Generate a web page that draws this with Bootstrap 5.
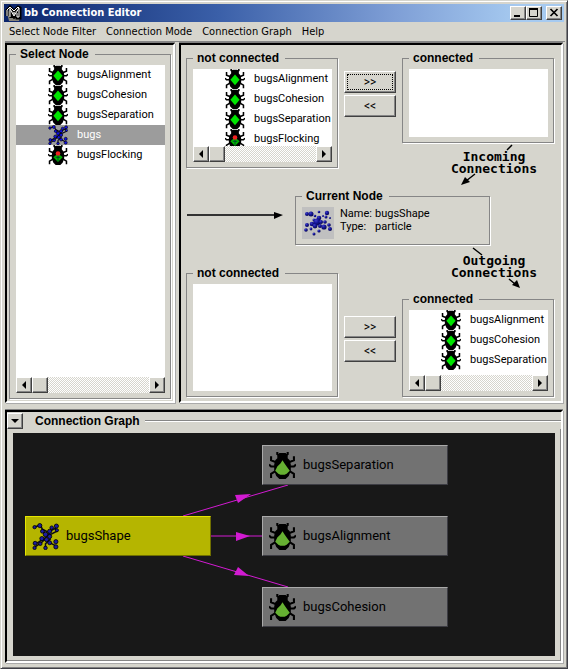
<!DOCTYPE html>
<html lang="en">
<head>
<meta charset="utf-8">
<meta name="viewport" content="width=device-width, initial-scale=1">
<title>bb Connection Editor</title>
<link rel="stylesheet" href="https://cdn.jsdelivr.net/npm/bootstrap@5.3.0/dist/css/bootstrap.min.css">
<style>
:root{--face:#d6d5cd;--shade:#868686;--dark:#404040}
body{background:var(--face);color:#000;font:11px/20px Roboto,"Liberation Sans",sans-serif}
.window-frame{min-height:100vh;padding:3px 2px 5px 4px;border:1px solid #d6d5cd;border-right-color:#404048;border-bottom-color:#404048;box-shadow:inset 1px 1px #fff,inset -1px -1px #808080}
.title-strip{height:18px;background:linear-gradient(90deg,#0a246a,#3a5fa8 38%,#7f9fd6 70%,#a6caf0 92%);color:#fff;font:bold 11px/18px "DejaVu Sans Condensed","DejaVu Sans",sans-serif;padding:0 2px 0 1px;margin-left:-1px;margin-right:1px}
.title-strip h1{font:inherit;padding-left:2px}
.raised{background:var(--face);border:1px solid;border-color:#fff var(--dark) var(--dark) #fff;box-shadow:inset -1px -1px var(--shade);border-radius:0;padding:0;color:#000}
.win-btn{width:16px;height:14px}
.menu-strip{height:20px;gap:10px;padding:0 4px;font:11px/20px "DejaVu Sans Condensed","DejaVu Sans",sans-serif;border-bottom:1px solid var(--shade)}
.menu-strip a{color:#000;text-decoration:none}
.main-area{padding:1px 2px 0 0}
.sunk{border:2px solid;border-color:#000 #fff #fff #000;box-shadow:0 -1px #808080,1px 1px #aaa}
.node-pane{flex:0 0 170px;min-width:0;padding:2px}
fieldset.group{min-width:0;border:1px solid var(--shade);padding:4px 5px 5px 6px;box-shadow:1px 1px #fff}
.group>legend{float:none;width:auto;margin:0;padding:0 6px 0 4px;font:bold 12px/14px "Liberation Sans",Arial,sans-serif;background:var(--face)}
.node-list{background:#fff;overflow:hidden;margin:0;padding:0;list-style:none;flex:1 1 0;min-height:0}
.node-list li{display:flex;height:20px;padding-left:32px;line-height:20px;white-space:nowrap}
.node-list li.picked{background:#9c9c9c;color:#fff}
.node-list svg{width:20px;height:20px;margin-right:9px;flex:none}
.scroller{height:16px;display:flex;flex:none;background:repeating-conic-gradient(#fff 0 25%,#d6d5cd 0 50%) 0 0/2px 2px}
.scroller>.raised{width:16px;height:16px;flex:none;display:flex}
.scroller svg{margin:auto}
.work-grid{display:grid;grid-template-columns:minmax(0,152fr) minmax(0,52fr) minmax(0,152fr);grid-template-rows:92px 46px 56px 47px 105px;column-gap:6px;padding:6px 7px 4px 5px;min-width:0}
.move-btn{height:22px;width:100%;font:12px/18px Roboto,sans-serif}
.move-btn.focused{outline:1px dotted #000;outline-offset:-4px}
.flow-label{position:relative;font:bold 13px/12px "DejaVu Sans Mono",monospace;text-align:center;padding-left:32px}
.flow-label svg{position:absolute;left:0;top:0}
.flow-label p{margin:0}
.arrow-cell{flex:0 0 109px}
.current-box{flex:0 0 195px}
.thumb-box{width:32px;height:32px;background:#c0c0c0;flex:none}
.facts{line-height:13px;display:grid;grid-template-columns:35px auto;align-content:start;margin:0 0 0 6px}
.facts dt{font-weight:400}.facts dd{margin:0}
.graph-pane{margin-top:7px}
.graph-head{height:17px}
.graph-head .rule{flex:1;height:2px;border-top:1px solid var(--shade);border-bottom:1px solid #fff}
.graph-head h2{font:bold 12px/16px "Liberation Sans",Arial,sans-serif;margin:0;padding:0 5px 0 12px}
.fold-btn{width:16px;height:16px;display:flex}
.fold-btn svg{margin:auto}
.graph-body{border-right:1px solid var(--shade);border-bottom:1px solid var(--shade);padding:4px 5px 4px 6px}
.canvas{background:#181818;position:relative;overflow:hidden}
.canvas>svg{position:absolute;left:0;top:0}
.gnode{position:absolute;width:186px;height:40px;background:#727272;border:1px solid;border-color:#aaa #3d3d44 #3d3d44 #aaa;display:flex;align-items:center;font:13px/20px Roboto,sans-serif;padding-left:6px;gap:7px}
.gnode svg{width:27px;height:27px;flex:none}
.gnode.main{background:#b5b500;border-color:#e6e600 #6f6f00 #6f6f00 #e6e600}
.at-main{left:12px;top:83px}.at-sep{left:249px;top:12px}.at-ali{left:249px;top:83px}.at-coh{left:249px;top:154px}
.cell-in-from{grid-area:1/1/3/2;margin-bottom:21px}
.cell-in-btns{grid-area:1/2;padding-top:20px;row-gap:2px}
.cell-in-to{grid-area:1/3}
.cell-in-label{grid-area:2/3;padding-top:8px}
.cell-current{grid-area:3/1/4/4}
.cell-out-label{grid-area:4/3;padding-top:10px}
.cell-out-from{grid-area:4/1/6/2;margin-top:21px}
.cell-out-btns{grid-area:5/2;padding-top:24px;row-gap:2px}
.cell-out-to{grid-area:5/3}
</style>
<script src="https://cdn.jsdelivr.net/npm/bootstrap@5.3.0/dist/js/bootstrap.bundle.min.js"></script>
</head>
<body>
<svg width="0" height="0" class="position-absolute" aria-hidden="true">
  <symbol id="beetle" viewBox="0 0 26 26">
    <path d="M10 3L8 2V0M16 3l2-1V0M2 4v4l5 2M24 4v4l-5 2M0 12l2 2h4M26 12l-2 2h-4M2 25v-4l5-3M24 25v-4l-5-3" fill="none" stroke="#000" stroke-width="2"/>
    <path d="M10 1h6l2 2v3l2 2 1 4v6l-2 5-3 3h-6l-3-3-2-5v-6l1-4 2-2V3z"/>
  </symbol>
  <symbol id="bug" viewBox="0 0 26 26"><use href="#beetle"/><path d="M13 7l6 7-6 7-6-7z" fill="#00e400"/></symbol>
  <symbol id="flock" viewBox="0 0 26 26"><use href="#beetle"/><path d="M13 11l6 5-6 6-6-6z" fill="#00b800"/><path d="M10 16h6M13 13v8" stroke="#033" stroke-width="1"/><circle cx="13" cy="11" r="3" fill="#f02020"/></symbol>
  <symbol id="gbug" viewBox="0 0 26 26"><use href="#beetle"/><path d="M13 8l2 3 2 3 3 4-3 3-2 1h-4l-2-1-3-3 2-4 3-3z" fill="#66b032"/></symbol>
  <symbol id="swarm" viewBox="0 0 26 26">
    <path d="M2 4l6-2 3 6 3 5 5-6 5-3M22 5l2 3-6 3-5 3-6 4-5 3M3 23l6-4 4-4 4 4 6 3M13 25v-5l5-5M10 6l6 3" fill="none" stroke="#0a0a18" stroke-width="1.500"/>
    <g fill="currentColor" stroke="#000" stroke-width=".8"><circle cx="2.500" cy="4" r="1.600"/><circle cx="7.500" cy="2.500" r="2"/><circle cx="19" cy="4.500" r="1.700"/><circle cx="23.500" cy="3" r="2"/><circle cx="24" cy="7" r="1.500"/><circle cx="10" cy="8" r="1.800"/><circle cx="17" cy="8" r="2"/><circle cx="13" cy="11" r="2.200"/><circle cx="17" cy="13" r="2"/><circle cx="9.500" cy="15" r="2"/><circle cx="14" cy="16" r="2"/><circle cx="3" cy="19.500" r="1.900"/><circle cx="2.500" cy="24" r="1.600"/><circle cx="8" cy="20" r="1.700"/><circle cx="17" cy="19" r="1.900"/><circle cx="23" cy="18" r="2"/><circle cx="23" cy="23" r="2"/><circle cx="13" cy="24" r="1.700"/></g>
  </symbol>
  <radialGradient id="ball" cx=".35" cy=".3" r=".7"><stop offset="0" stop-color="#4040c8"/><stop offset=".5" stop-color="#141498"/><stop offset="1" stop-color="#080850"/></radialGradient>
  <symbol id="arr-l" viewBox="0 0 8 8"><path d="M6 0v8L2 4z"/></symbol>
  <symbol id="arr-r" viewBox="0 0 8 8"><path d="M2 0v8l4-4z"/></symbol>
</svg>

<div class="window-frame d-flex flex-column">
  <header class="title-strip d-flex align-items-center">
    <svg width="17" height="17" viewBox="0 0 17 17" class="flex-shrink-0" aria-hidden="true">
      <path d="M2 8l3-4h9l2 4-2 8H4z" fill="#85837a"/><path d="M2 11V5l3-3 4 4 4-4 2 1v10h-3V8l-3 4-3-4v5" fill="none" stroke="#000" stroke-width="3"/><path d="M2 11V5l3-3 4 4 4-4 1 1v9M5 3v9M5 4l4 7 5-8M9 7v3M12 8v4h2" fill="none" stroke="#fff" stroke-width="1"/>
    </svg>
    <h1 class="m-0 flex-grow-1">bb Connection Editor</h1>
    <button class="raised win-btn d-flex" aria-label="Minimize"><svg width="14" height="12"><path d="M3 8h6v2H3z"/></svg></button>
    <button class="raised win-btn d-flex" aria-label="Maximize"><svg width="14" height="12"><path d="M2.500 2v7.500h8V2" fill="none" stroke="#000"/><path d="M2 1h9v2H2z"/></svg></button>
    <button class="raised win-btn d-flex ms-1" aria-label="Close"><svg width="14" height="12"><path d="M3.500 2l7 7M10.500 2l-7 7" stroke="#000" stroke-width="1.700"/></svg></button>
  </header>
  <nav class="menu-strip d-flex" aria-label="Main menu">
    <a href="#">Select Node Filter</a><a href="#">Connection Mode</a><a href="#">Connection Graph</a><a href="#">Help</a>
  </nav>

  <main class="main-area d-flex flex-column flex-grow-1">
    <div class="d-flex gap-1">
      <section class="sunk node-pane d-flex flex-column">
        <fieldset class="group flex-grow-1 d-flex flex-column">
          <legend>Select Node</legend>
          <ul class="node-list">
            <li><svg><use href="#bug"/></svg>bugsAlignment</li>
            <li><svg><use href="#bug"/></svg>bugsCohesion</li>
            <li><svg><use href="#bug"/></svg>bugsSeparation</li>
            <li class="picked"><svg color="#1010e8"><use href="#swarm"/></svg>bugs</li>
            <li><svg><use href="#flock"/></svg>bugsFlocking</li>
          </ul>
          <div class="scroller"><button class="raised" aria-label="Scroll left"><svg width="8" height="8"><use href="#arr-l"/></svg></button><span class="raised"></span><button class="raised ms-auto" aria-label="Scroll right"><svg width="8" height="8"><use href="#arr-r"/></svg></button></div>
        </fieldset>
      </section>

      <section class="sunk work-grid flex-grow-1">
        <fieldset class="group cell-in-from d-flex flex-column">
          <legend>not connected</legend>
          <ul class="node-list">
            <li><svg><use href="#bug"/></svg>bugsAlignment</li>
            <li><svg><use href="#bug"/></svg>bugsCohesion</li>
            <li><svg><use href="#bug"/></svg>bugsSeparation</li>
            <li><svg><use href="#flock"/></svg>bugsFlocking</li>
          </ul>
          <div class="scroller"><button class="raised" aria-label="Scroll left"><svg width="8" height="8"><use href="#arr-l"/></svg></button><span class="raised"></span><button class="raised ms-auto" aria-label="Scroll right"><svg width="8" height="8"><use href="#arr-r"/></svg></button></div>
        </fieldset>
        <div class="cell-in-btns d-flex flex-column">
          <button class="raised move-btn focused">&gt;&gt;</button><button class="raised move-btn">&lt;&lt;</button>
        </div>
        <fieldset class="group cell-in-to d-flex flex-column">
          <legend>connected</legend><ul class="node-list"></ul>
        </fieldset>
        <div class="flow-label cell-in-label">
          <svg width="153" height="46" aria-hidden="true"><path d="M110 2l-5 5M73 31L64 38" stroke="#000" stroke-width="1.500"/><path d="M59 42l4-8 5 5z"/></svg>
          <p>Incoming<br>Connections</p>
        </div>
        <div class="cell-current d-flex">
          <div class="arrow-cell d-flex align-items-center"><svg width="100" height="10" aria-hidden="true"><path d="M1 3h88" stroke="#333" stroke-width="2"/><path d="M88 0l9 3-9 4z"/></svg></div>
          <fieldset class="group current-box">
            <legend>Current Node</legend>
            <div class="d-flex">
              <div class="thumb-box d-flex"><svg width="32" height="32" viewBox="0 0 32 32" fill="url(#ball)" aria-hidden="true"><circle cx="5" cy="7" r="2"/><circle cx="9" cy="7" r="2.500"/><circle cx="17" cy="5" r="1.300"/><circle cx="25" cy="6" r="2.200"/><circle cx="24" cy="10" r="1.500"/><circle cx="28" cy="11" r="1"/><circle cx="13" cy="9" r="1.300"/><circle cx="17" cy="11" r="2.300"/><circle cx="12" cy="13" r="1.500"/><circle cx="21" cy="9" r="1"/><circle cx="15" cy="15" r="3.500"/><circle cx="19" cy="15" r="2"/><circle cx="23" cy="15" r="1.800"/><circle cx="10" cy="17" r="2.300"/><circle cx="13" cy="19" r="2.400"/><circle cx="18" cy="19" r="2"/><circle cx="5" cy="18" r="2"/><circle cx="4" cy="23" r="1.800"/><circle cx="9" cy="22" r="1.400"/><circle cx="22" cy="20" r="2.600"/><circle cx="27" cy="18" r="1.800"/><circle cx="28" cy="22" r="2"/><circle cx="17" cy="24" r="1.600"/><circle cx="12" cy="27" r="1.500"/></svg></div>
              <dl class="facts"><dt>Name:</dt><dd>bugsShape</dd><dt>Type:</dt><dd>particle</dd></dl>
            </div>
          </fieldset>
        </div>
        <div class="flow-label cell-out-label">
          <svg width="153" height="47" aria-hidden="true"><path d="M71 3l9 7M107 34l6 5" stroke="#000" stroke-width="1.500"/><path d="M118 43l-8-3 5-5z"/></svg>
          <p>Outgoing<br>Connections</p>
        </div>
        <fieldset class="group cell-out-from d-flex flex-column">
          <legend>not connected</legend><ul class="node-list"></ul>
        </fieldset>
        <div class="cell-out-btns d-flex flex-column">
          <button class="raised move-btn">&gt;&gt;</button><button class="raised move-btn">&lt;&lt;</button>
        </div>
        <fieldset class="group cell-out-to d-flex flex-column">
          <legend>connected</legend>
          <ul class="node-list">
            <li><svg><use href="#bug"/></svg>bugsAlignment</li>
            <li><svg><use href="#bug"/></svg>bugsCohesion</li>
            <li><svg><use href="#bug"/></svg>bugsSeparation</li>
          </ul>
          <div class="scroller"><button class="raised" aria-label="Scroll left"><svg width="8" height="8"><use href="#arr-l"/></svg></button><span class="raised"></span><button class="raised ms-auto" aria-label="Scroll right"><svg width="8" height="8"><use href="#arr-r"/></svg></button></div>
        </fieldset>
      </section>
    </div>

    <section class="sunk graph-pane flex-grow-1 d-flex flex-column">
      <div class="graph-head d-flex align-items-center">
        <button class="raised fold-btn" aria-label="Collapse Connection Graph"><svg width="8" height="6"><path d="M0 1h8L4 5z"/></svg></button>
        <h2>Connection Graph</h2><span class="rule"></span>
      </div>
      <div class="graph-body flex-grow-1 d-flex">
        <div class="canvas flex-grow-1">
          <svg width="542" height="223" aria-hidden="true" fill="#d21bd2"><path d="M170 83L275 52M197 103h52M170 123l105 31" stroke="#d21bd2" fill="none"/><path d="M222 62l16-1-13 9zM223 99l14 4-14 5zM225 134l11 9-15-1z"/></svg>
          <div class="gnode main at-main"><svg color="#1c1ca0"><use href="#swarm"/></svg>bugsShape</div>
          <div class="gnode at-sep"><svg><use href="#gbug"/></svg>bugsSeparation</div>
          <div class="gnode at-ali"><svg><use href="#gbug"/></svg>bugsAlignment</div>
          <div class="gnode at-coh"><svg><use href="#gbug"/></svg>bugsCohesion</div>
        </div>
      </div>
    </section>
  </main>
</div>
</body>
</html>
